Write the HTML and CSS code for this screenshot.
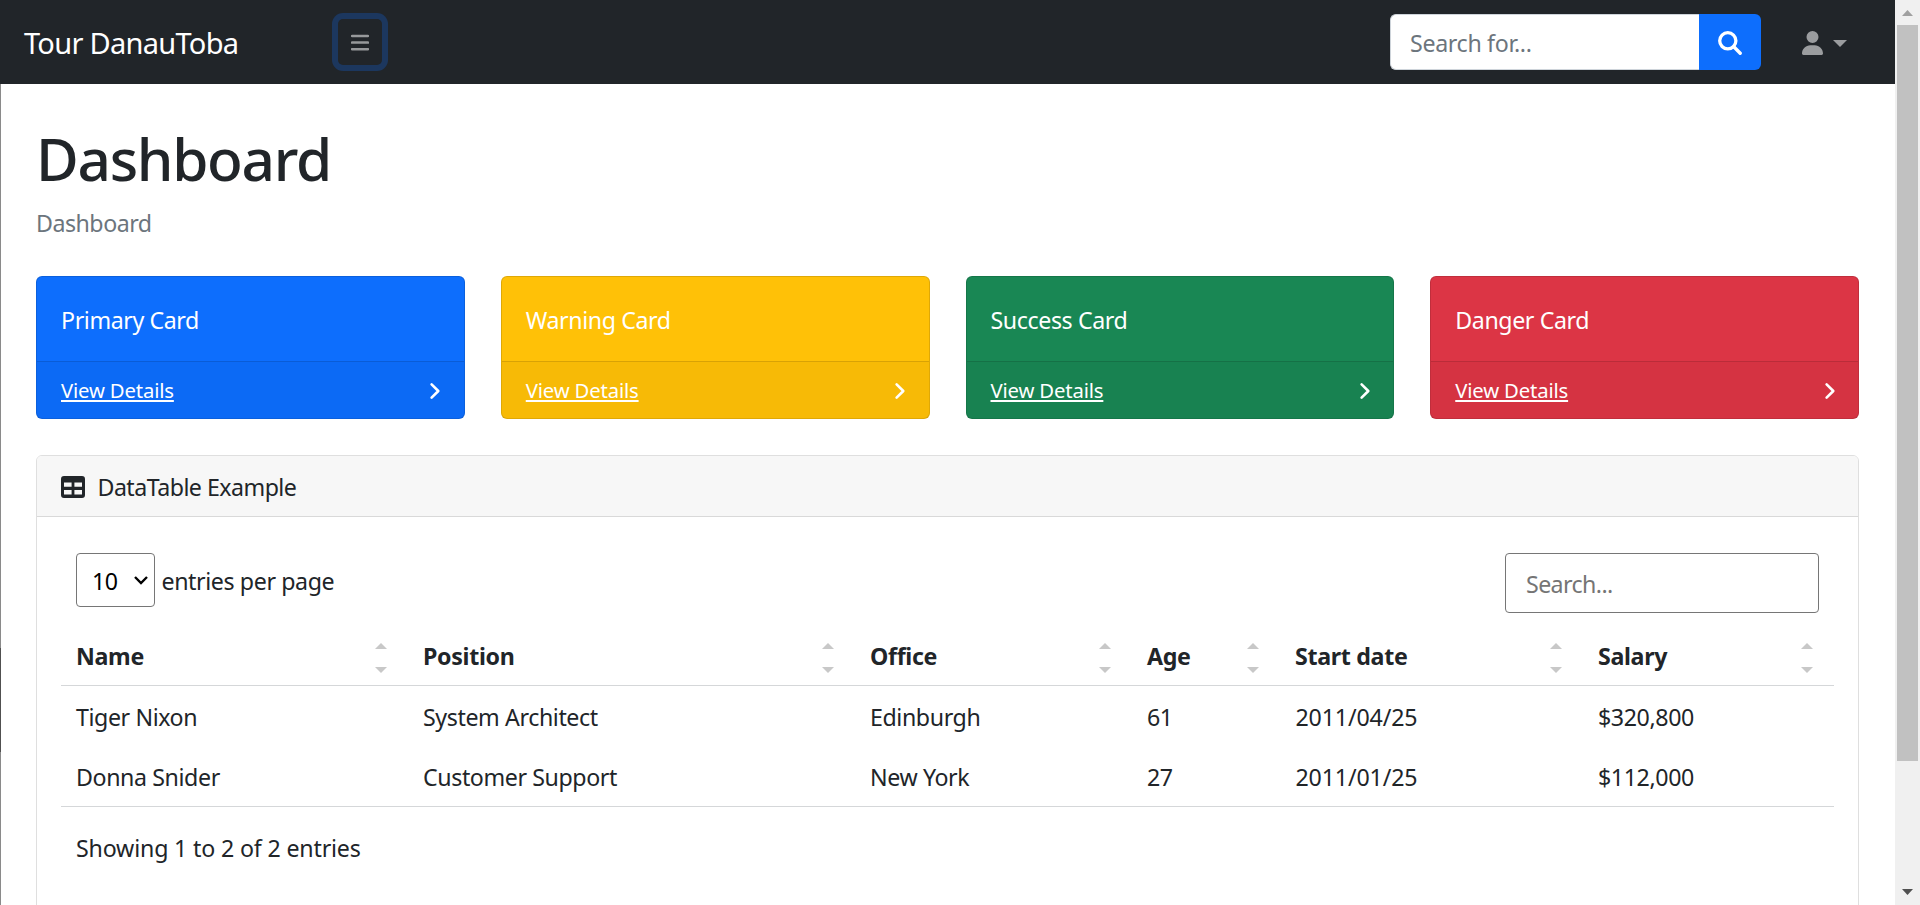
FILE: index.html
```html
<!DOCTYPE html>
<html lang="en">
<head>
<meta charset="utf-8">
<title>Dashboard</title>
<link rel="stylesheet" href="styles.css">
</head>
<body>
<div class="page">
  <nav class="topnav">
    <a class="brand">Tour DanauToba</a>
    <button class="toggle" aria-label="Toggle sidebar">
      <svg width="18" height="18" viewBox="0 0 18 18"><path d="M1 2h16M1 8.6h16M1 15.2h16" stroke="#97999b" stroke-width="2.5" stroke-linecap="round"/></svg>
    </button>
    <form class="search">
      <div class="search-field">Search for...</div>
      <div class="search-button">
        <svg width="24" height="24" viewBox="0 0 24 24" fill="none" stroke="#fff"><circle cx="9.8" cy="9.8" r="8.1" stroke-width="3.3"/><path d="M15.8 15.8l6.4 6.4" stroke-width="3.4" stroke-linecap="round"/></svg>
      </div>
    </form>
    <div class="user">
      <svg width="21" height="24" viewBox="0 0 448 512" fill="#9b9d9f"><path d="M224 256a128 128 0 1 0 0-256 128 128 0 1 0 0 256zM178 304C80 304 0 384 0 482c0 16 13 30 30 30h388c17 0 30-14 30-30 0-98-80-178-178-178z"/></svg>
      <svg width="14" height="7" viewBox="0 0 14 7" fill="#9b9d9f"><path d="M0 0h14L7 7z"/></svg>
    </div>
  </nav>
  <main class="main">
    <h1 class="title">Dashboard</h1>
    <div class="breadcrumb">Dashboard</div>
    <div class="cards">
      <section class="card primary"><div class="card-body">Primary Card</div><div class="card-foot"><a class="details">View Details</a><svg class="chev" width="12" height="18" viewBox="0 0 12 18"><path d="M2.6 2.3L9.3 9l-6.7 6.7"/></svg></div></section>
      <section class="card warning"><div class="card-body">Warning Card</div><div class="card-foot"><a class="details">View Details</a><svg class="chev" width="12" height="18" viewBox="0 0 12 18"><path d="M2.6 2.3L9.3 9l-6.7 6.7"/></svg></div></section>
      <section class="card success"><div class="card-body">Success Card</div><div class="card-foot"><a class="details">View Details</a><svg class="chev" width="12" height="18" viewBox="0 0 12 18"><path d="M2.6 2.3L9.3 9l-6.7 6.7"/></svg></div></section>
      <section class="card danger"><div class="card-body">Danger Card</div><div class="card-foot"><a class="details">View Details</a><svg class="chev" width="12" height="18" viewBox="0 0 12 18"><path d="M2.6 2.3L9.3 9l-6.7 6.7"/></svg></div></section>
    </div>
    <section class="panel">
      <header class="panel-head">
        <svg width="24" height="22" viewBox="0 0 24 22"><path fill="#212529" fill-rule="evenodd" d="M3 0h18a3 3 0 0 1 3 3v16a3 3 0 0 1-3 3H3a3 3 0 0 1-3-3V3a3 3 0 0 1 3-3zM3 6.5v4.2h7.6V6.5zM13.4 6.5v4.2H21V6.5zM3 14v4.6h7.6V14zM13.4 14v4.6H21V14z"/></svg>
        <span>DataTable Example</span>
      </header>
      <div class="panel-body">
        <div class="tools">
          <div class="per-page">
            <div class="select"><span>10</span><svg width="14" height="9" viewBox="0 0 14 9" fill="none" stroke="#000" stroke-width="2.4"><path d="M1 1l6 6 6-6"/></svg></div>
            <span class="per-label">entries per page</span>
          </div>
          <div class="filter">Search...</div>
        </div>
        <table class="table">
          <colgroup><col class="c-name"><col class="c-position"><col class="c-office"><col class="c-age"><col class="c-date"><col class="c-salary"></colgroup>
          <thead><tr>
            <th><div class="th">Name<span class="sort"></span></div></th>
            <th><div class="th">Position<span class="sort"></span></div></th>
            <th><div class="th">Office<span class="sort"></span></div></th>
            <th><div class="th">Age<span class="sort"></span></div></th>
            <th><div class="th">Start date<span class="sort"></span></div></th>
            <th><div class="th">Salary<span class="sort"></span></div></th>
          </tr></thead>
          <tbody>
            <tr><td>Tiger Nixon</td><td>System Architect</td><td>Edinburgh</td><td>61</td><td class="num">2011/04/25</td><td>$320,800</td></tr>
            <tr><td>Donna Snider</td><td>Customer Support</td><td>New York</td><td>27</td><td class="num">2011/01/25</td><td>$112,000</td></tr>
          </tbody>
        </table>
        <div class="info">Showing 1 to 2 of 2 entries</div>
      </div>
    </section>
  </main>
</div>
<div class="scrollbar">
  <svg width="11" height="6" viewBox="0 0 11 6"><path fill="#a0a0a0" d="M5.5 0L11 6H0z"/></svg>
  <div class="thumb"></div>
  <svg class="down" width="11" height="6" viewBox="0 0 11 6"><path fill="#505050" d="M0 0h11L5.5 6z"/></svg>
</div>
</body>
</html>
```
FILE: styles.css
```css
* { box-sizing: border-box; }
html { overflow: hidden; }
body {
  margin: 0;
  display: flex;
  height: 905px;
  overflow: hidden;
  background: #fff;
  color: #212529;
  font: 400 23.2px/36px "Noto Sans", "Open Sans", sans-serif;
  letter-spacing: -0.4px;
}
svg { display: block; flex: none; }
.page { width: 1895px; height: 905px; overflow: hidden; }

.topnav {
  display: flex;
  align-items: center;
  height: 84px;
  background: #212529;
}
.brand {
  width: 338px;
  padding: 1px 0 0 24px;
  color: #fff;
  font-size: 29px;
  line-height: 45px;
  letter-spacing: -0.72px;
}
.toggle {
  display: flex;
  align-items: center;
  justify-content: center;
  width: 44px;
  height: 46px;
  padding: 1px 0 0;
  border: 0;
  border-radius: 5px;
  background: none;
  box-shadow: 0 0 0 6px #1c375e;
}
.search { display: flex; margin-left: auto; }
.search-field {
  width: 309px;
  height: 56px;
  padding: 10px 18px 0 19px;
  border: 1px solid #ced4da;
  border-right: 0;
  border-radius: 6px 0 0 6px;
  background: #fff;
  color: #6c757d;
  letter-spacing: -0.33px;
}
.search-button {
  display: flex;
  align-items: center;
  justify-content: center;
  width: 62px;
  height: 56px;
  padding-top: 2px;
  border-radius: 0 6px 6px 0;
  background: #0d6efd;
}
.user { display: flex; align-items: center; gap: 10px; padding: 2px 48px 0 41px; }

.main {
  height: 821px;
  padding: 36px 36px 0;
  background: linear-gradient(#8a8a8a 564px, #505050 564px, #505050 668px, #8a8a8a 668px) left top / 1px 100% no-repeat;
}
.title {
  height: 72px;
  margin: 0 0 12px;
  padding-top: 2px;
  font-size: 58.5px;
  font-weight: 500;
  line-height: 72px;
  letter-spacing: -1.3px;
}
.breadcrumb { height: 36px; margin-bottom: 36px; padding-top: 1px; color: #6c757d; letter-spacing: -0.5px; }

.cards { display: grid; grid-template-columns: repeat(4, 1fr); gap: 36px; margin-bottom: 36px; }
.card {
  height: 143px;
  border: 1px solid rgba(0, 0, 0, 0.125);
  border-radius: 6px;
  color: #fff;
}
.primary { background: #0d6efd; }
.warning { background: #ffc107; }
.success { background: #198754; }
.danger { background: #dc3545; }
.card-body { height: 84px; padding: 25px 24px 0; }
.card-foot {
  display: flex;
  align-items: center;
  justify-content: space-between;
  height: 57px;
  padding: 0 22.5px 0 24px;
  border-top: 1px solid rgba(0, 0, 0, 0.125);
  background: rgba(0, 0, 0, 0.03);
}
.details {
  font-size: 20.3px;
  line-height: 31px;
  letter-spacing: -0.16px;
  text-decoration: underline;
  text-decoration-thickness: 2px;
  text-underline-offset: 2px;
  text-decoration-skip-ink: none;
}
.chev { margin-top: 1px; fill: none; stroke: #fff; stroke-width: 2.6; stroke-linecap: round; stroke-linejoin: round; }

.panel {
  height: 520px;
  border: 1px solid #dfdfdf;
  border-radius: 6px;
}
.panel-head {
  display: flex;
  align-items: center;
  gap: 12.5px;
  height: 61px;
  padding: 1px 24px 0;
  border-bottom: 1px solid #d9d9d9;
  border-radius: 5px 5px 0 0;
  background: #f7f7f7;
  letter-spacing: -0.53px;
}
.panel-head svg { margin-top: 1px; }
.panel-body { padding: 36px 24px 0; }
.tools { display: flex; justify-content: space-between; align-items: flex-start; height: 72px; padding: 0 15px; }
.per-page { display: flex; gap: 6.5px; }
.select {
  display: flex;
  align-items: center;
  justify-content: space-between;
  width: 79px;
  height: 54px;
  padding: 1px 6px 0 15px;
  border: 1px solid #767676;
  border-radius: 4px;
  color: #000;
}
.per-label { padding-top: 10px; }
.filter {
  width: 314px;
  height: 60px;
  padding: 12px 20px 0;
  border: 1px solid #767676;
  border-radius: 4px;
  color: #757575;
  letter-spacing: -0.6px;
}
.table { width: 1773px; border-collapse: separate; border-spacing: 0; table-layout: fixed; }
.c-name { width: 347px; }
.c-position { width: 447px; }
.c-office { width: 277px; }
.c-age { width: 148px; }
.c-date { width: 303px; }
.c-salary { width: 251px; }
.table th { height: 61px; padding: 2px 21px 0 15px; border-bottom: 1px solid #d5d7d9; text-align: left; letter-spacing: -0.32px; }
.table td { height: 60px; padding: 2px 15px 0; }
.table tr:last-child td { height: 61px; border-bottom: 1px solid #d5d7d9; }
.table .num { padding-left: 15.5px; letter-spacing: -0.15px; }
.th { display: flex; align-items: center; justify-content: space-between; height: 36px; }
.sort { display: flex; flex-direction: column; gap: 18px; padding-top: 3px; }
.sort::before, .sort::after { content: ""; border: 6px solid transparent; border-top: 0; border-bottom: 6px solid #c8c8c8; }
.sort::after { border-bottom: 0; border-top: 6px solid #c8c8c8; }
.info { padding: 23px 15px 0; letter-spacing: -0.17px; }

.scrollbar {
  display: flex;
  flex-direction: column;
  align-items: center;
  width: 25px;
  height: 905px;
  padding: 10px 0;
  background: #f0f0f0;
}
.thumb { width: 21px; height: 736px; margin-top: 9px; background: #c1c1c1; }
.down { margin-top: auto; }
```
